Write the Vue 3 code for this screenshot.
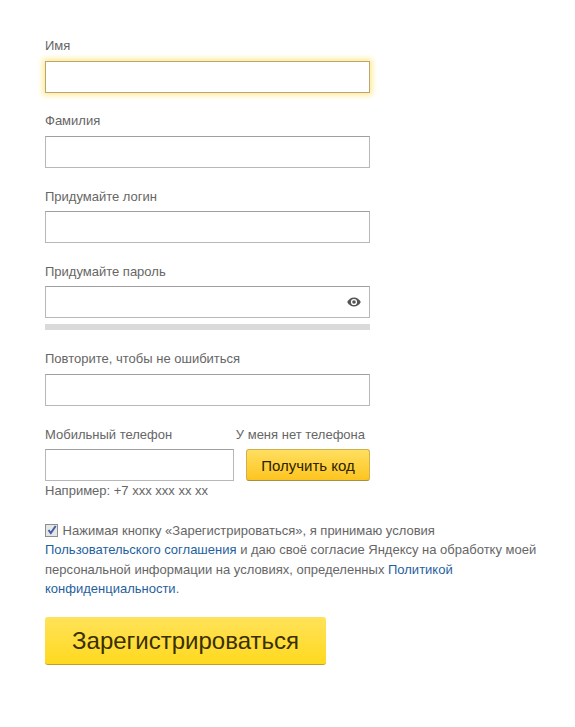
<script setup>
const top = [
  { label: 'Имя', focus: true },
  { label: 'Фамилия' },
  { label: 'Придумайте логин', low: true },
]
</script>

<template>
  <form class="page" @submit.prevent>
    <div v-for="f in top" :key="f.label" class="field">
      <div class="label" :class="{ low: f.low }">{{ f.label }}</div>
      <div class="input" :class="{ focus: f.focus }"></div>
    </div>

    <div class="field pass">
      <div class="label low">Придумайте пароль</div>
      <div class="input eye-wrap">
        <svg class="eye" width="14" height="10" viewBox="0 0 14 10">
          <path d="M7 .4C4 .4 1.600 2.200.2 5c1.400 2.800 3.800 4.600 6.800 4.600s5.400-1.800 6.800-4.600C12.400 2.200 10 .4 7 .4z" fill="#555" />
          <circle cx="7" cy="5" r="3.100" fill="#fff" />
          <circle cx="7" cy="5" r="1.800" fill="#555" />
        </svg>
      </div>
      <div class="meter"></div>
    </div>

    <div class="field repeat">
      <div class="label">Повторите, чтобы не ошибиться</div>
      <div class="input"></div>
    </div>

    <div class="phone">
      <div class="phone-labels">
        <span class="label">Мобильный телефон</span>
        <span class="label">У меня нет телефона</span>
      </div>
      <div class="phone-row">
        <div class="input small"></div>
        <button type="button" class="code">Получить код</button>
      </div>
      <div class="hint">Например: +7 xxx xxx xx xx</div>
    </div>

    <p class="terms">
      <span class="check">
        <svg width="10" height="10" viewBox="0 0 10 10"><path d="M1.500 5l2.300 3L8.700 1" fill="none" stroke="#3f5fa8" stroke-width="2" /></svg>
      </span>
      Нажимая кнопку «Зарегистрироваться», я принимаю условия
      <a href="#">Пользовательского соглашения</a> и даю своё согласие Яндексу на обработку моей
      персональной информации на условиях, определенных <a href="#">Политикой конфиденциальности</a>.
    </p>

    <button type="button" class="submit">Зарегистрироваться</button>
  </form>
</template>

<style scoped>
.page {
  width: 500px;
  height: 727px;
  box-sizing: border-box;
  padding: 38px 0 0 45px;
  font-family: "Liberation Sans", Arial, sans-serif;
  font-size: 13px;
  color: #666;
}
.field {
  width: 325px;
  margin-bottom: 20px;
}
.label {
  display: block;
  line-height: 15px;
  margin-bottom: 8px;
}
.label.low {
  padding-top: 1px;
  margin-bottom: 7px;
}
.input {
  box-sizing: border-box;
  width: 325px;
  height: 32px;
  background: #fff;
  border: 1px solid #b8b8b8;
  border-top-color: #9f9f9f;
}
.focus {
  border-color: #b9a76b;
  box-shadow: 0 0 6px 2px #ffe88f;
}
.eye-wrap {
  display: flex;
  align-items: center;
  justify-content: flex-end;
  padding-right: 8px;
}
.meter {
  height: 6px;
  margin-top: 6px;
  background: #dadada;
}
.pass {
  margin-bottom: 21px;
}
.repeat {
  margin-bottom: 21px;
}
.phone {
  width: 325px;
}
.phone-labels {
  display: flex;
  justify-content: space-between;
  padding-right: 5px;
}
.phone-labels .label {
  margin-bottom: 7px;
}
.phone-row {
  display: flex;
  justify-content: space-between;
}
.small {
  width: 189px;
}
.code {
  box-sizing: border-box;
  width: 124px;
  height: 32px;
  padding: 0;
  border: 1px solid #d0b04e;
  border-bottom-color: #a88f45;
  border-radius: 3px;
  background: linear-gradient(#ffdf60, #fdc41f);
  color: #2b2300;
  font: 15px "Liberation Sans", Arial, sans-serif;
}
.hint {
  line-height: 15px;
  margin-top: 2px;
}
.terms {
  width: 500px;
  margin: 23px 0 0;
  line-height: 19.300px;
}
.check {
  display: inline-flex;
  align-items: center;
  justify-content: center;
  box-sizing: border-box;
  width: 13px;
  height: 13px;
  margin-right: 1px;
  vertical-align: 0;
  border: 1px solid #8e8e8e;
  background: #e6e6e6;
}
a {
  color: #1f5f9e;
  text-decoration: none;
}
.submit {
  display: block;
  box-sizing: border-box;
  width: 281px;
  height: 48px;
  margin-top: 19px;
  padding: 0;
  border: 0;
  border-bottom: 1px solid #c2a11f;
  border-radius: 3px;
  background: linear-gradient(#ffe25a, #ffd91f);
  color: #3a3000;
  font: 24px "Liberation Sans", Arial, sans-serif;
}
</style>
